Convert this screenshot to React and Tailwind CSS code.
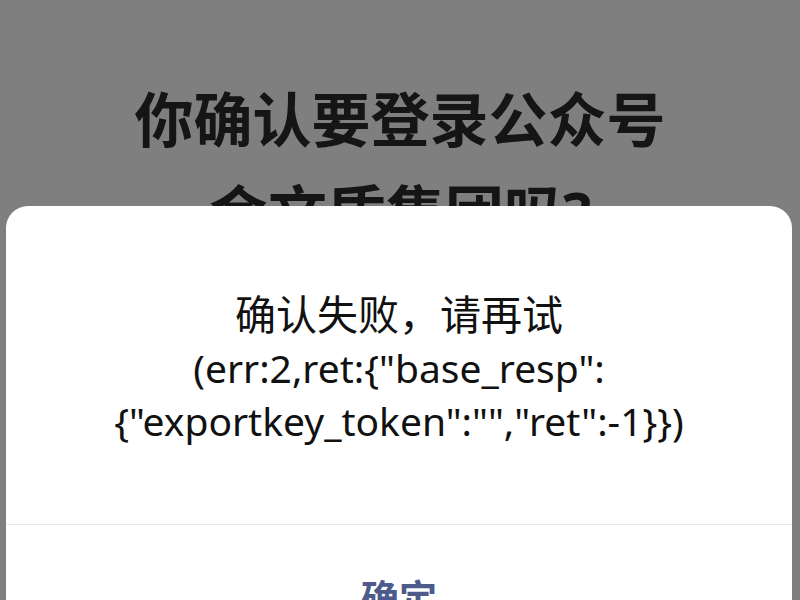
import React from "react";

const font = { fontFamily: '"Noto Sans", "Noto Sans CJK SC", sans-serif' };

export default function App() {
  return (
    <div className="relative h-[600px] w-[800px] overflow-hidden bg-[#7f7f7f]" style={font}>
      {/* 背景页面标题 */}
      <div className="pt-[73px] text-center text-[59px] font-bold leading-[93px] text-[#151515]">
        <div>你确认要登录公众号</div>
        <div>会文质集团吗?</div>
      </div>

      {/* 弹窗 */}
      <div className="absolute left-[6px] right-[8px] top-[206px] h-[460px] rounded-t-[22px] bg-white">
        <div className="pt-[82px] text-center text-[39px] leading-[53px] text-[#111111]">
          <div className="text-[41px]">确认失败，请再试</div>
          <div>(err:2,ret:{'{'}"base_resp":</div>
          <div>{'{'}"exportkey_token":"","ret":-1{'}}'})</div>
        </div>
        <div className="mt-[77px] border-t border-[#e8e8e8]" />
        <div className="pt-[44px] text-center text-[38px] font-bold text-[#4d5b8c]">确定</div>
      </div>
    </div>
  );
}
